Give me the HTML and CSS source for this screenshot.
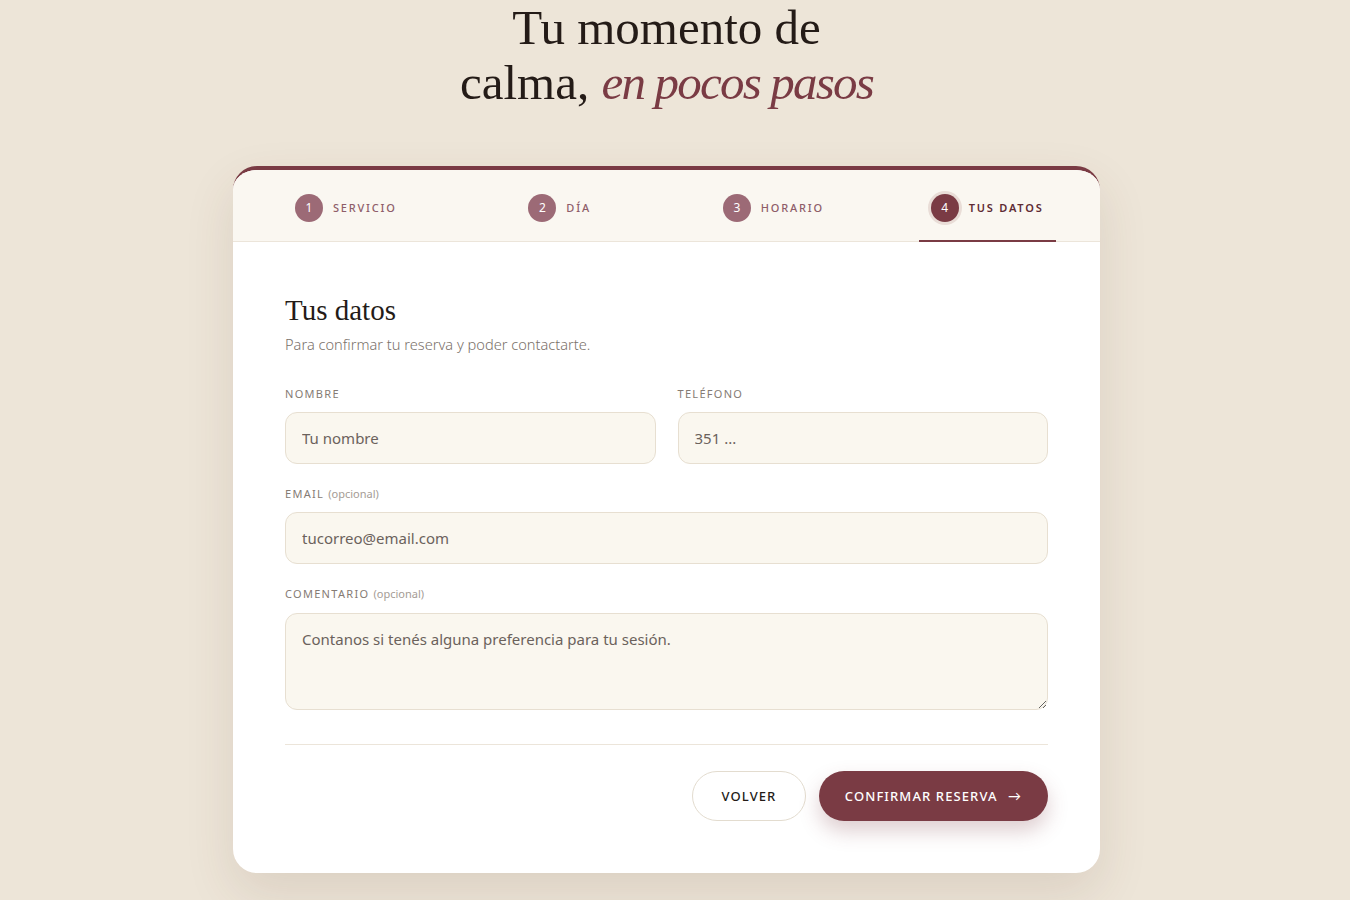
FILE: index.html
```html
<!doctype html>
<html lang="es">
  <head>
    <meta charset="UTF-8" />
    <meta name="viewport" content="width=device-width, initial-scale=1.0" />
    <title>Reservá tu sesión</title>
    <link rel="stylesheet" href="styles.css">
  </head>
  <body>
    <div class="page">
      <h1 class="title">Tu momento de<br>calma, <em>en pocos pasos</em></h1>

      <div class="card">
        <div class="steps">
          <div class="step-col"><div class="step"><span class="num">1</span><span class="label">Servicio</span></div></div>
          <div class="step-col"><div class="step"><span class="num">2</span><span class="label">Día</span></div></div>
          <div class="step-col"><div class="step"><span class="num">3</span><span class="label">Horario</span></div></div>
          <div class="step-col"><div class="step active"><span class="num">4</span><span class="label">Tus datos</span></div></div>
        </div>

        <form class="content" onsubmit="return false">
          <h2 class="heading">Tus datos</h2>
          <p class="sub">Para confirmar tu reserva y poder contactarte.</p>

          <div class="row">
            <div class="field">
              <label>Nombre</label>
              <input type="text" placeholder="Tu nombre">
            </div>
            <div class="field">
              <label>Teléfono</label>
              <input type="tel" placeholder="351 ...">
            </div>
          </div>

          <div class="field">
            <label>Email <span class="opt">(opcional)</span></label>
            <input type="email" placeholder="tucorreo@email.com">
          </div>

          <div class="field comment">
            <label>Comentario <span class="opt">(opcional)</span></label>
            <textarea placeholder="Contanos si tenés alguna preferencia para tu sesión."></textarea>
          </div>

          <div class="actions">
            <button class="btn ghost" type="button">Volver</button>
            <button class="btn primary" type="submit">Confirmar reserva <span class="arrow">→</span></button>
          </div>
        </form>
      </div>
    </div>
  </body>
</html>
```

FILE: styles.css
```css
body {
  margin: 0;
  background-color: #ede5d8;
  font-family: "Noto Sans", Lato, sans-serif;
  color: #2b211d;
}

/* the reference is laid out next to a 17px scrollbar */
.page {
  max-width: 1333px;
  padding-bottom: 60px;
  display: flex;
  flex-direction: column;
  align-items: center;
}

.title {
  margin: 0 0 56px;
  font-family: "Liberation Serif", serif;
  font-weight: 400;
  font-size: 49px;
  line-height: 55px;
  text-align: center;
  color: #241b17;
}

.title em {
  color: #7a3b44;
  letter-spacing: -1.8px;
}

.card {
  width: 867px;
  background-color: #fff;
  border-top: 4px solid #7a3b44;
  border-radius: 24px;
  box-shadow: 0 20px 50px rgba(90, 60, 40, 0.12);
  overflow: hidden;
}

.steps {
  display: flex;
  padding: 0 6px;
  height: 72px;
  box-sizing: border-box;
  background-color: #faf7f1;
  border-bottom: 1px solid #ece5da;
}

.step-col {
  flex: 1;
  display: flex;
  justify-content: center;
}

.step {
  display: flex;
  align-items: center;
  gap: 10px;
  padding: 5px 12px 0;
  border-bottom: 2px solid transparent;
  margin-bottom: -1px;
}

.step.active {
  border-bottom-color: #7a3b44;
}

.num {
  width: 28px;
  height: 28px;
  border-radius: 50%;
  background-color: #9c6a76;
  color: #fff;
  font-size: 12px;
  display: flex;
  align-items: center;
  justify-content: center;
}

.step.active .num {
  background-color: #7a3b44;
  box-shadow: 0 0 0 3px #e9ddd7;
}

.label {
  font-size: 11px;
  font-weight: 500;
  letter-spacing: 1.8px;
  text-transform: uppercase;
  color: #8e5d69;
}

.step.active .label {
  color: #5e2b34;
  font-weight: 600;
}

.content {
  padding: 50px 52px 52px;
}

.heading {
  margin: 0 0 5px;
  font-family: "Liberation Serif", serif;
  font-weight: 400;
  font-size: 29px;
  line-height: 36px;
  color: #241b17;
}

.sub {
  margin: 0 0 31px;
  font-size: 14.6px;
  line-height: 22px;
  color: #7a716a;
  font-weight: 300;
}

.row {
  display: grid;
  grid-template-columns: 1fr 1fr;
  gap: 22px;
}

.field {
  display: flex;
  flex-direction: column;
  gap: 10px;
  margin-bottom: 22px;
}

.field label {
  font-size: 11px;
  line-height: 16px;
  letter-spacing: 1.3px;
  text-transform: uppercase;
  color: #857b74;
}

.opt {
  text-transform: none;
  letter-spacing: 0;
  color: #a59c95;
}

input,
textarea {
  box-sizing: border-box;
  width: 100%;
  height: 52px;
  padding: 0 16px;
  border: 1px solid #e7dfd1;
  border-radius: 12px;
  background-color: #faf7ef;
  font-family: "Noto Sans", Lato, sans-serif;
  font-size: 15px;
  color: #3a302b;
}

textarea {
  height: 97px;
  padding-top: 15px;
  resize: vertical;
}

input::placeholder,
textarea::placeholder {
  color: #6b625c;
}

.field.comment {
  margin-bottom: 0;
  gap: 11px;
}

.actions {
  display: flex;
  justify-content: flex-end;
  gap: 13px;
  margin-top: 34px;
  padding-top: 26px;
  border-top: 1px solid #ece5da;
}

.btn {
  height: 50px;
  border-radius: 25px;
  font-family: "Noto Sans", Lato, sans-serif;
  font-size: 13px;
  font-weight: 500;
  letter-spacing: 1.1px;
  text-transform: uppercase;
  cursor: pointer;
}

.ghost {
  width: 114px;
  background-color: #fff;
  border: 1px solid #e3dccf;
  color: #241b17;
}

.primary {
  width: 229px;
  background-color: #7a3b44;
  border: none;
  color: #fff;
  box-shadow: 0 10px 20px rgba(122, 59, 68, 0.25);
}

.arrow {
  margin-left: 6px;
}
```
